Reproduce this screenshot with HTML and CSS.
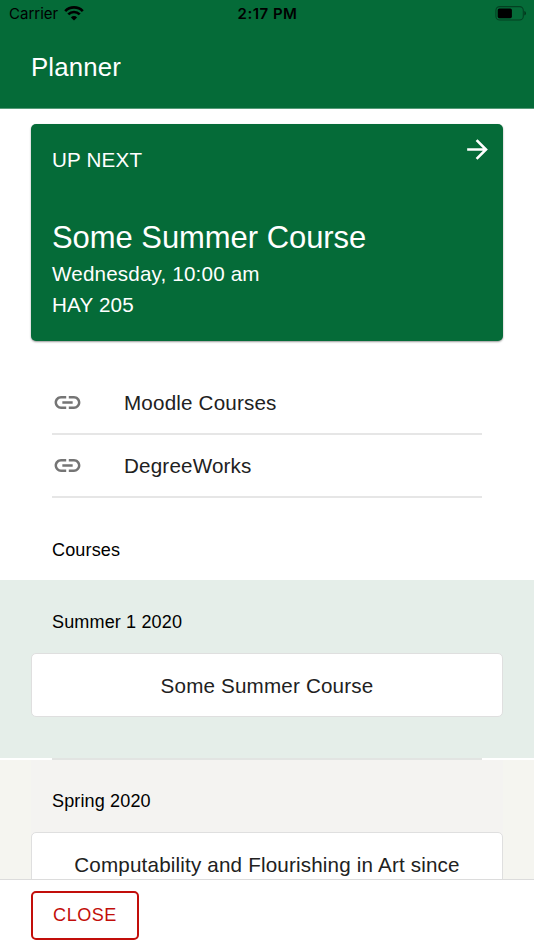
FILE: index.html
```html
<!DOCTYPE html>
<html lang="en">

<head>
    <meta charset="UTF-8">
    <meta name="viewport" content="width=device-width, initial-scale=1.0">
    <title>Planner</title>
    <link rel="stylesheet" href="styles.css">
</head>

<body>
    <div class="app">
        <header class="header">
            <div class="statusBar">
                <div class="carrier">
                    <span>Carrier</span>
                    <svg class="wifi" viewBox="0 0 20 15">
                        <path d="M1.2 5.1A12.4 12.4 0 0 1 18.8 5.1M4.3 8.4A8 8 0 0 1 15.7 8.4" fill="none" stroke="#000" stroke-width="2.7"/>
                        <path d="M10 14.5L6.9 11.4A4.4 4.4 0 0 1 13.1 11.4Z"/>
                    </svg>
                </div>
                <span class="time">2:17 PM</span>
                <svg class="battery" viewBox="0 0 31 15">
                    <rect x=".9" y=".6" width="27.4" height="13.4" rx="3.8" fill="none" stroke="#000" stroke-opacity=".4" stroke-width="1.1"/>
                    <rect x="2.7" y="2.4" width="14.2" height="9.8" rx="1.6"/>
                    <path d="M29.3 5v4.6q1.7-.6 1.7-2.3T29.3 5z" fill-opacity=".5"/>
                </svg>
            </div>
            <h1 class="title">Planner</h1>
        </header>

        <main class="content">
            <a class="nextCard" href="#">
                <div class="nextTop">
                    <span>UP NEXT</span>
                    <svg class="arrow" viewBox="0 0 24 24">
                        <path d="M12 4l-1.41 1.41L16.17 11H4v2h12.17l-5.58 5.59L12 20l8-8z"/>
                    </svg>
                </div>
                <h2 class="nextName">Some Summer Course</h2>
                <p>Wednesday, 10:00 am</p>
                <p>HAY 205</p>
            </a>

            <nav class="links">
                <a class="link" href="#">
                    <svg class="linkIcon" viewBox="0 0 24 24">
                        <path d="M3.9 12c0-1.71 1.39-3.1 3.1-3.1h4V7H7c-2.76 0-5 2.24-5 5s2.24 5 5 5h4v-1.9H7c-1.71 0-3.1-1.39-3.1-3.1zM8 13h8v-2H8v2zm9-6h-4v1.9h4c1.71 0 3.1 1.39 3.1 3.1s-1.39 3.1-3.1 3.1h-4V17h4c2.76 0 5-2.24 5-5s-2.24-5-5-5z"/>
                    </svg>
                    <span>Moodle Courses</span>
                </a>
                <a class="link" href="#">
                    <svg class="linkIcon" viewBox="0 0 24 24">
                        <path d="M3.9 12c0-1.71 1.39-3.1 3.1-3.1h4V7H7c-2.76 0-5 2.24-5 5s2.24 5 5 5h4v-1.9H7c-1.71 0-3.1-1.39-3.1-3.1zM8 13h8v-2H8v2zm9-6h-4v1.9h4c1.71 0 3.1 1.39 3.1 3.1s-1.39 3.1-3.1 3.1h-4V17h4c2.76 0 5-2.24 5-5s-2.24-5-5-5z"/>
                    </svg>
                    <span>DegreeWorks</span>
                </a>
            </nav>

            <h3 class="subheader">Courses</h3>

            <section class="term current">
                <h3 class="subheader">Summer 1 2020</h3>
                <a class="course" href="#">Some Summer Course</a>
            </section>
            <hr class="divider">
            <section class="term past">
                <div class="termInner">
                    <h3 class="subheader">Spring 2020</h3>
                    <a class="course" href="#">Computability and Flourishing in Art since</a>
                </div>
            </section>
        </main>

        <footer class="footer">
            <button class="closeBtn">CLOSE</button>
        </footer>
    </div>
</body>

</html>
```

FILE: styles.css
```css
* {
    box-sizing: border-box;
}

body {
    margin: 0;
    font-family: "Liberation Sans", Arial, sans-serif;
    font-size: 20.64px;
    letter-spacing: 0.17px;
    color: #212121;
    background: #fff;
}

h1, h2, h3, p {
    margin: 0;
    font-weight: 400;
}

a {
    color: inherit;
    text-decoration: none;
}

.app {
    display: flex;
    flex-direction: column;
    height: 950px;
    overflow: hidden;
}

/* header */
.header {
    flex: none;
    height: 109px;
    background: #056b38;
    border-bottom: 1px solid #569a78;
}

.statusBar {
    display: grid;
    grid-template-columns: 1fr auto 1fr;
    align-items: center;
    height: 27px;
    padding: 0 8px 0 9px;
    font-family: Inter, "Liberation Sans", sans-serif;
    font-size: 15px;
    letter-spacing: 0;
    color: #000;
}

.carrier {
    display: flex;
    align-items: center;
    gap: 6px;
}

.wifi {
    width: 20px;
    height: 15px;
    margin-bottom: 1px;
}

.time {
    font-weight: 600;
    letter-spacing: 0.5px;
}

.battery {
    justify-self: end;
    width: 31px;
    height: 15px;
}

.title {
    padding: 24px 31px 0;
    font-size: 25.8px;
    line-height: 33px;
    letter-spacing: 0.15px;
    color: #fff;
}

/* content */
.content {
    flex: 1;
    min-height: 0;
    overflow: hidden;
}

.nextCard {
    display: block;
    height: 217px;
    margin: 15px 31px 0;
    padding: 20px 15px 0 21px;
    line-height: 31px;
    color: #fff;
    background: #056b38;
    border-radius: 5px;
    box-shadow: 0 1px 2px rgba(0, 0, 0, 0.4);
}

.nextTop {
    display: flex;
    justify-content: space-between;
    height: 73px;
}

.arrow {
    width: 31px;
    height: 31px;
    margin: -10px -5px 0 0;
    fill: #fff;
}

.nextName {
    font-size: 30.96px;
    line-height: 41px;
    letter-spacing: -0.03px;
}

.links {
    padding: 30px 52px 0;
}

.link {
    display: flex;
    align-items: center;
    gap: 41px;
    height: 63.5px;
    padding-top: 2px;
    border-bottom: 2px solid #e6e6e6;
}

.linkIcon {
    width: 31px;
    height: 31px;
    margin-top: -1px;
    fill: #757575;
}

.subheader {
    padding: 0 52px;
    font-size: 18.06px;
    line-height: 62px;
    letter-spacing: 0.13px;
    color: #000;
}

.links + .subheader {
    height: 82px;
    padding-top: 21px;
}

.term.current {
    height: 178px;
    padding-top: 11px;
    background: #e5eee9;
}

.course {
    display: block;
    height: 64px;
    margin: 0 31px;
    line-height: 64px;
    text-align: center;
    background: #fff;
    border: 1px solid #dfdfdf;
    border-radius: 5px;
}

.divider {
    height: 2px;
    margin: 0 52px;
    border: 0;
    background: #e2e4e2;
}

.term.past {
    padding: 0 31px;
    background: #f5f5f0;
}

.termInner {
    padding-top: 10px;
    background: #f4f3f1;
}

.termInner .subheader {
    padding: 0 21px;
}

.termInner .course {
    height: 95px;
    margin: 0;
}

/* footer */
.footer {
    flex: none;
    height: 71px;
    padding: 11px 31px;
    background: #fff;
    border-top: 1px solid #dcdcdc;
}

.closeBtn {
    display: block;
    width: 108px;
    height: 49px;
    padding: 0;
    font-family: inherit;
    font-size: 18.06px;
    letter-spacing: 0.52px;
    color: #c20e0a;
    background: #fff;
    border: 2px solid #c20e0a;
    border-radius: 5px;
}
```
